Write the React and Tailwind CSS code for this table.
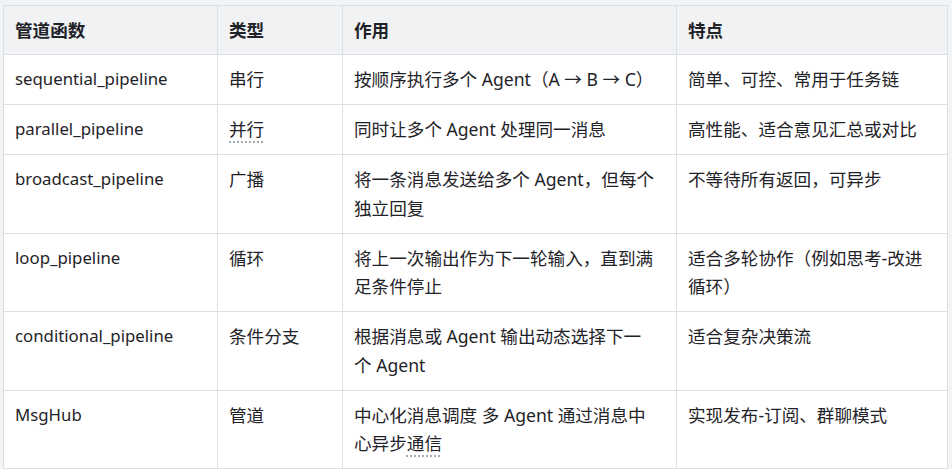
import React from "react";

const rows = [
  ["sequential_pipeline", "串行", ["按顺序执行多个 Agent（A → B → C）"], ["简单、可控、常用于任务链"]],
  ["parallel_pipeline", <span className="underline decoration-dotted decoration-[#9aa0a6] underline-offset-[5px]">并行</span>, ["同时让多个 Agent 处理同一消息"], ["高性能、适合意见汇总或对比"]],
  ["broadcast_pipeline", "广播", ["将一条消息发送给多个 Agent，但每个", "独立回复"], ["不等待所有返回，可异步"]],
  ["loop_pipeline", "循环", ["将上一次输出作为下一轮输入，直到满", "足条件停止"], ["适合多轮协作（例如思考-改进", "循环）"]],
  ["conditional_pipeline", "条件分支", ["根据消息或 Agent 输出动态选择下一", "个 Agent"], ["适合复杂决策流"]],
  ["MsgHub", "管道", ["中心化消息调度 多 Agent 通过消息中", <>心异步<span className="underline decoration-dotted decoration-[#9aa0a6] underline-offset-[5px]">通信</span></>], ["实现发布-订阅、群聊模式"]],
];

function Lines({ lines }) {
  return lines.map((l, i) => (
    <React.Fragment key={i}>
      {i > 0 && <br />}
      {l}
    </React.Fragment>
  ));
}

export default function App() {
  const cell = "border border-[#dcdfe3] px-[11px] py-[10.25px] align-top text-left";
  return (
    <div
      className="w-[952px] h-[475px] bg-white overflow-hidden text-[#1f2328] text-[17.6px] leading-[28.5px]"
      style={{ fontFamily: '"Noto Sans", "Noto Sans CJK SC", sans-serif' }}
    >
      <div className="bg-[#f2f3f5] pt-[5px] pl-[3px] pr-[5px]">
        <table className="w-[944px] border-collapse table-fixed bg-white">
          <colgroup>
            <col className="w-[214px]" />
            <col className="w-[125px]" />
            <col className="w-[334px]" />
            <col className="w-[271px]" />
          </colgroup>
          <thead>
            <tr className="bg-[#f1f2f4]">
              {["管道函数", "类型", "作用", "特点"].map((h) => (
                <th key={h} className="border border-[#dcdfe3] px-[11px] py-[9.75px] text-left font-bold">
                  {h}
                </th>
              ))}
            </tr>
          </thead>
          <tbody>
            {rows.map((r, i) => (
              <tr key={i}>
                <td className={cell + " text-[16.8px]"}>{r[0]}</td>
                <td className={cell}>{r[1]}</td>
                <td className={cell}><Lines lines={r[2]} /></td>
                <td className={cell}><Lines lines={r[3]} /></td>
              </tr>
            ))}
          </tbody>
        </table>
      </div>
    </div>
  );
}
